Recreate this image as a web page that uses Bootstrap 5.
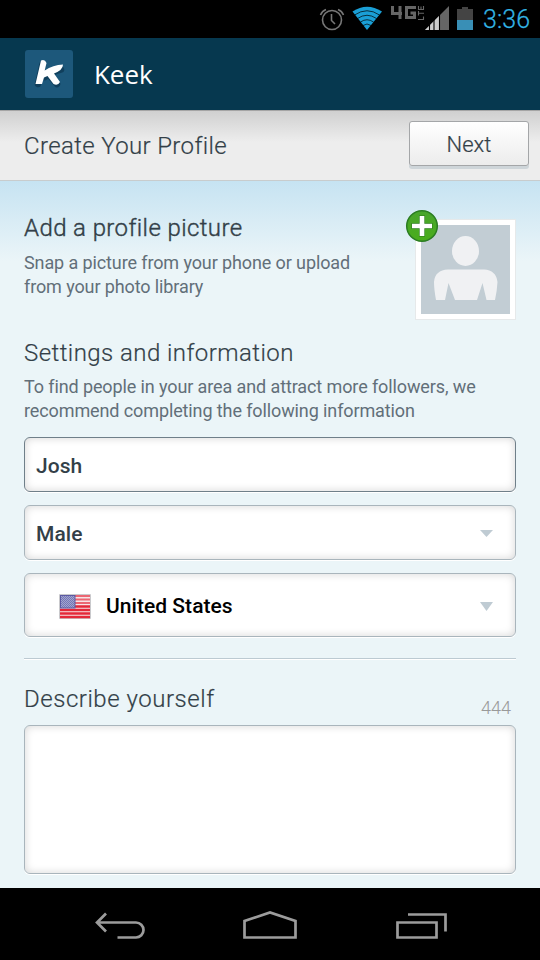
<!DOCTYPE html>
<html lang="en">
<head>
<meta charset="utf-8">
<meta name="viewport" content="width=device-width, initial-scale=1">
<title>Keek</title>
<link href="https://cdn.jsdelivr.net/npm/bootstrap@5.3.0/dist/css/bootstrap.min.css" rel="stylesheet">
<script src="https://cdn.jsdelivr.net/npm/bootstrap@5.3.0/dist/js/bootstrap.bundle.min.js" defer></script>
<style>
body{width:540px;height:960px;overflow:hidden;font-family:Roboto,"Liberation Sans",sans-serif;color:#333f48;background:#000}
svg{display:block;flex:none}
.status-strip{height:38px;padding-right:10px;background:#000;color:#33b5e5}
.clock-text{width:47px;font-size:25px;line-height:38px;font-weight:300;letter-spacing:.1px;margin-left:10px;padding-top:1px;-webkit-text-stroke:.25px #33b5e5}
.app-bar{height:72px;background:#06384f;padding-left:25px}
.app-name{font-family:"Open Sans","Noto Sans",sans-serif;font-size:26px;letter-spacing:-.05px;margin-left:21px;color:#fff}
.title-strip{height:71px;padding:0 11px 0 24px;border-bottom:1px solid #c8cccd;border-top:1px solid #a5a5a5;background:linear-gradient(#d0d0d0,#ededed 45%,#ededed)}
.heading{font-size:24px;line-height:30px;font-weight:300;margin:0;-webkit-text-stroke:.2px #333f48}
.page-title{letter-spacing:.36px}
.set-title{letter-spacing:.44px}
.desc-title{letter-spacing:.53px}
.add-title{letter-spacing:.4px;-webkit-text-stroke:.4px #333f48}
.next-btn{width:120px;height:45px;border:1px solid #a4a6a8;border-radius:3px;background:linear-gradient(#fff,#ececec);box-shadow:0 3px 0 #ced5d9;font-size:22px;line-height:28px;font-weight:300;letter-spacing:0;color:#333f48;padding:3px 0 0;margin-bottom:4px;-webkit-text-stroke:.2px #333f48}
.form-area{height:707px;padding:0 24px;background:linear-gradient(#c6e3f2 0,#ebf5f8 80px)}
.intro{height:149px;padding-top:32px}
.note{font-size:18px;line-height:24px;letter-spacing:-.11px;color:#626f79;margin:0}
.intro .note{margin-top:8px}
.set-note{margin:7px 0 14px}
.avatar-box{width:101px;height:101px;margin-top:6px;background:#fff;border:1px solid #e6e9ea;padding:5px}
.plus-badge{left:-11px;top:-11px}
.field{border:1px solid #a9b5bc;border-radius:6px;background:#fff;box-shadow:inset 0 0 8px rgba(0,0,0,.17),0 1px 0 #fff;padding:4px 22px 0 11px;font-size:21px;font-weight:500;letter-spacing:.04px;height:55px;margin-bottom:13px}
.field svg{margin-bottom:2px}
.field-active{border-color:#6f7f89}
.field-country{height:64px;color:#000;padding-left:34px;margin-bottom:21px}
.country-name{margin-left:15px}
.rule{height:2px;background:#bccad2;border-bottom:1px solid #fff}
.count{font-size:18px;line-height:22px;font-weight:300;color:#999;margin:0 5px -5px 0}
.describe-head{margin-bottom:11px}
.about{height:149px;margin:0;resize:none}
.system-nav{height:72px;background:#000}
</style>
</head>
<body>
<header class="status-strip d-flex justify-content-end">
  <svg width="154" height="38" viewBox="0 0 154 38">
    <g fill="none" stroke="#777" stroke-width="1.6"><circle cx="13" cy="20" r="9.5"/><path d="M12.500 14V20.500L16 24M1.500 15Q3 11 7 9.500M24.500 15Q23 11 19 9.500"/></g>
    <path d="M33.500 11.500Q48 2 63 11.500L48 30Z" fill="#1a9fd6"/>
    <g fill="none" stroke="#000" stroke-width="1" opacity=".7"><path d="M35.500 15Q48 6.500 60.500 15M38.500 18.500Q48 12 57.500 18.500M41.500 22Q48 17.500 54.500 22M44 25.500Q48 22.500 52 25.500"/></g>
    <path d="M73.500 6V13.500H83M81 6V19M97 7.500H87.500V17.500H95.500V13H91.500" fill="none" stroke="#666" stroke-width="3"/>
    <path d="M99.500 6V9.500H104.500V6M102 6.500V9.500M99.500 11V15.500M99.500 13.300H105M99 19.500H104.500V16.500" fill="none" stroke="#666" stroke-width="1.100"/>
    <path d="M130 6V30H106Z" fill="#666"/><path d="M120 16V30H106Z" fill="#ccc"/>
    <path d="M110.500 24V30M115 20V30M120.500 15V30" stroke="#000" stroke-width="1.100"/>
    <path d="M138 9H143V7H149V9H154V20H138Z" fill="#444"/><path d="M138 20H154V30H138Z" fill="#398fb6"/>
  </svg>
  <span class="clock-text">3:36</span>
</header>
<nav class="app-bar d-flex align-items-center">
  <svg width="48" height="48" viewBox="0 0 48 48">
    <rect width="48" height="48" rx="3" fill="#1d587b"/>
    <path d="M17.500 14L13 34M36 19.500Q28 21 20 27M25 26L32 34" fill="none" stroke="#0b3550" stroke-width="6.500" opacity=".7" stroke-linecap="round"/>
    <path d="M16 10.500Q20 9 21.500 13L19.700 20.500Q28 15 38 14.500Q38 20 29 23.500L35 32Q33 36 28.500 34L22.500 26L19 27.500L17 34H10.500Z" fill="#fff"/>
  </svg>
  <span class="app-name">Keek</span>
</nav>
<section class="title-strip d-flex align-items-center justify-content-between">
  <h1 class="heading page-title">Create Your Profile</h1>
  <button class="btn next-btn" type="button">Next</button>
</section>
<main class="form-area">
  <section class="intro d-flex justify-content-between">
    <div>
      <h2 class="heading add-title">Add a profile picture</h2>
      <p class="note">Snap a picture from your phone or upload<br>from your photo library</p>
    </div>
    <div class="avatar-box position-relative">
      <svg width="89" height="89" viewBox="0 0 89 89"><rect width="89" height="89" fill="#c2cdd4"/><ellipse cx="44.500" cy="26" rx="13.500" ry="15" fill="#f0f1f3"/><path d="M15 75Q13 64 13 57Q14 45 27 44.500H63Q75 45 76.500 57Q76 66 74 75H65.500L61.500 58L56 75H34L27.500 58L24 75Z" fill="#f0f1f3"/></svg>
      <svg class="plus-badge position-absolute" width="34" height="34" viewBox="0 0 34 34">
        <defs><linearGradient id="green" x2="0" y2="1"><stop stop-color="#48a52d"/><stop offset="1" stop-color="#4aad1b"/></linearGradient></defs>
        <circle cx="17" cy="17" r="15.300" fill="url(#green)" stroke="#2b7d22" stroke-width="1.500"/><path d="M17 6.500V27.500M6.500 17H27.500" stroke="#287b1b" stroke-width="6"/><path d="M17 7V27M7 17H27" stroke="#fff" stroke-width="4.700"/>
      </svg>
    </div>
  </section>
  <section>
    <h2 class="heading set-title pt-2">Settings and information</h2>
    <p class="note set-note">To find people in your area and attract more followers, we<br>recommend completing the following information</p>
    <div class="field field-active d-flex align-items-center">Josh</div>
    <div class="field d-flex align-items-center justify-content-between">Male<svg width="13" height="7"><path d="M0 0H13L6.500 7Z" fill="#bfcbd3"/></svg></div>
    <div class="field field-country d-flex align-items-center">
      <svg width="32" height="25" viewBox="0 0 32 25">
        <defs><pattern id="stars" width="2" height="2" patternUnits="userSpaceOnUse"><rect width="2" height="2" fill="#7478b6"/><path d="M0 0H1V1H0ZM1 1H2V2H1Z" fill="#a3a4cf"/></pattern></defs>
        <rect width="32" height="25" rx="1" fill="#c9c9cc"/><rect x="1" y="1" width="30" height="23" fill="#f7e4e7"/>
        <path d="M1 2H31M1 5.500H31M1 9H31" stroke="#ec6773" stroke-width="2"/><path d="M1 12.500H31M1 16H31M1 19.500H31M1 23H31" stroke="#e4273a" stroke-width="2.400"/>
        <rect x="1.500" y="1.500" width="14.500" height="12.500" fill="url(#stars)" stroke="#5c5aa3"/>
      </svg>
      <span class="country-name me-auto">United States</span>
      <svg width="13" height="9"><path d="M0 0H13L6.500 9Z" fill="#bfcbd3"/></svg>
    </div>
  </section>
  <div class="rule"></div>
  <section>
    <div class="describe-head d-flex justify-content-between align-items-end pt-4"><h2 class="heading desc-title">Describe yourself</h2><span class="count">444</span></div>
    <textarea class="field about w-100 d-block" aria-label="Describe yourself"></textarea>
  </section>
</main>
<footer class="system-nav">
  <svg width="540" height="72" viewBox="0 0 540 72" fill="none" stroke="#9c9c9c" stroke-width="2.700"><path d="M106 25.500L97 34.500L106 43.500M97 34.500H136A7.500 7.500 0 0 1 136 49.500H117.500"/><path d="M244.500 49.500V33L270 24.500L295.500 33V49.500Z"/><path d="M397.500 34.500H436.500V49.500H397.500ZM408 26.500H445.500V43.500"/></svg>
</footer>
</body>
</html>
